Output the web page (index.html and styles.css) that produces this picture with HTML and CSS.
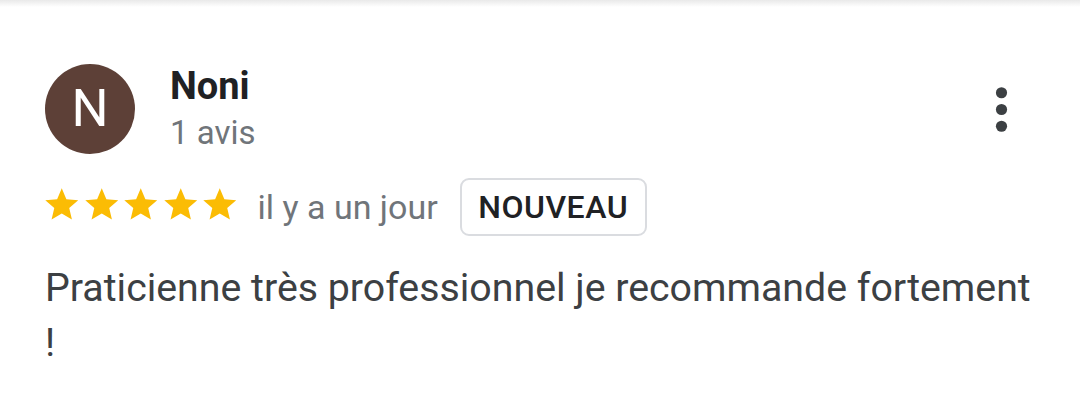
FILE: index.html
```html
<!DOCTYPE html>
<html lang="fr">
<head>
<meta charset="utf-8">
<link rel="stylesheet" href="styles.css">
</head>
<body>
<div class="shadow"></div>
<div class="review">
  <div class="header">
    <div class="avatar">N</div>
    <div class="info">
      <div class="name">Noni</div>
      <div class="count">1 avis</div>
    </div>
    <div class="menu">
      <svg viewBox="0 0 24 24" width="67" height="67"><circle cx="12" cy="6" r="2"/><circle cx="12" cy="12" r="2"/><circle cx="12" cy="18" r="2"/></svg>
    </div>
  </div>
  <div class="meta">
    <div class="stars">
      <svg viewBox="0 0 24 24" width="39.5" height="39.5"><path d="M12 17.27L18.18 21l-1.64-7.03L22 9.24l-7.19-.61L12 2 9.19 8.63 2 9.24l5.46 4.73L5.82 21z"/></svg>
      <svg viewBox="0 0 24 24" width="39.5" height="39.5"><path d="M12 17.27L18.18 21l-1.64-7.03L22 9.24l-7.19-.61L12 2 9.19 8.63 2 9.24l5.46 4.73L5.82 21z"/></svg>
      <svg viewBox="0 0 24 24" width="39.5" height="39.5"><path d="M12 17.27L18.18 21l-1.64-7.03L22 9.24l-7.19-.61L12 2 9.19 8.63 2 9.24l5.46 4.73L5.82 21z"/></svg>
      <svg viewBox="0 0 24 24" width="39.5" height="39.5"><path d="M12 17.27L18.18 21l-1.64-7.03L22 9.24l-7.19-.61L12 2 9.19 8.63 2 9.24l5.46 4.73L5.82 21z"/></svg>
      <svg viewBox="0 0 24 24" width="39.5" height="39.5"><path d="M12 17.27L18.18 21l-1.64-7.03L22 9.24l-7.19-.61L12 2 9.19 8.63 2 9.24l5.46 4.73L5.82 21z"/></svg>
    </div>
    <span class="date">il y a un jour</span>
    <span class="badge">NOUVEAU</span>
  </div>
  <p class="text">Praticienne très professionnel je recommande fortement !</p>
</div>
</body>
</html>
```
FILE: styles.css
```css
html, body {
  margin: 0;
  padding: 0;
  background: #ffffff;
}
body {
  font-family: Roboto, "Liberation Sans", sans-serif;
  width: 1080px;
  height: 409px;
  overflow: hidden;
  position: relative;
}
.shadow {
  position: absolute;
  left: 0;
  top: 0;
  width: 100%;
  height: 7px;
  background: linear-gradient(to bottom, #e9e9e9, rgba(255,255,255,0));
}
.review {
  padding: 64px 45px 0 45px;
}
.header {
  display: flex;
  align-items: flex-start;
}
.avatar {
  width: 90px;
  height: 90px;
  border-radius: 50%;
  background: #5d4037;
  color: #ffffff;
  font-size: 52px;
  line-height: 90px;
  text-align: center;
  flex: none;
}
.info {
  margin-left: 35px;
  flex: 1;
}
.name {
  font-size: 38px;
  font-weight: 700;
  color: #202124;
  line-height: 44px;
}
.count {
  font-size: 33px;
  color: #70757a;
  line-height: 50px;
}
.menu {
  margin-top: 12px;
  width: 67px;
  height: 67px;
  flex: none;
}
.menu svg {
  display: block;
  fill: #3c4043;
}
.meta {
  display: flex;
  align-items: center;
  margin-top: 20px;
  height: 58px;
}
.stars {
  display: flex;
  margin-left: -3px;
  margin-top: -4px;
}
.stars svg {
  display: block;
  fill: #fbbc04;
}
.date {
  margin-left: 18px;
  font-size: 34px;
  color: #70757a;
}
.badge {
  margin-left: 22px;
  box-sizing: border-box;
  height: 58px;
  width: 187px;
  border: 2px solid #dadce0;
  border-radius: 9px;
  font-size: 32px;
  font-weight: 500;
  color: #202124;
  display: flex;
  align-items: center;
  justify-content: center;
  letter-spacing: 0.5px;
}
.text {
  margin: 25px 0 0 0;
  font-size: 39.3px;
  line-height: 55px;
  color: #3c4043;
}
```
